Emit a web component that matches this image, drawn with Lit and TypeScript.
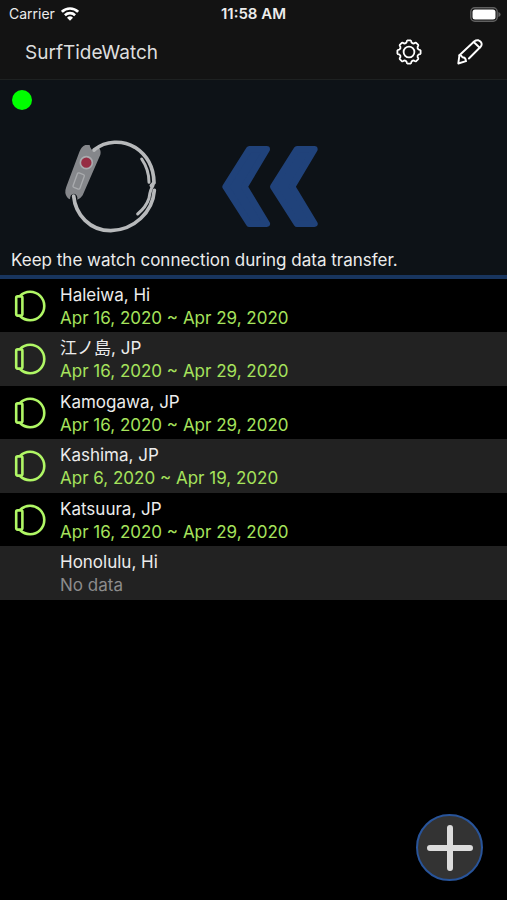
import { LitElement, html, css, svg } from "lit";
import { customElement, property } from "lit/decorators.js";

interface Spot {
  name: string;
  period?: string;
}

const SPOTS: Spot[] = [
  { name: "Haleiwa, Hi", period: "Apr 16, 2020 ~ Apr 29, 2020" },
  { name: "江ノ島, JP", period: "Apr 16, 2020 ~ Apr 29, 2020" },
  { name: "Kamogawa, JP", period: "Apr 16, 2020 ~ Apr 29, 2020" },
  { name: "Kashima, JP", period: "Apr 6, 2020 ~ Apr 19, 2020" },
  { name: "Katsuura, JP", period: "Apr 16, 2020 ~ Apr 29, 2020" },
  { name: "Honolulu, Hi" },
];

// Outline of a cog with eight teeth around the centre of a 26 unit box.
function cogPath(): string {
  const point = (radius: number, degrees: number) => {
    const a = (degrees * Math.PI) / 180;
    return `${(13 + radius * Math.sin(a)).toFixed(2)} ${(13 - radius * Math.cos(a)).toFixed(2)}`;
  };
  let d = "";
  for (let i = 0; i < 8; i++) {
    const a = i * 45;
    d += `${i ? "L" : "M"}${point(10, a - 14)} Q${point(11.6, a - 12)} ${point(11.7, a - 7)} L${point(11.7, a + 7)} Q${point(11.6, a + 12)} ${point(10, a + 14)} Q${point(8.8, a + 22.5)} ${point(10, a + 31)} `;
  }
  return d + "Z";
}

@customElement("status-bar")
export class StatusBar extends LitElement {
  static styles = css`
    :host {
      display: grid;
      grid-template-columns: 1fr auto 1fr;
      align-items: center;
      height: 28px;
      padding: 0 6px;
      font-size: 14px;
      line-height: 20px;
    }
    .carrier {
      display: flex;
      align-items: center;
      gap: 6px;
      padding-left: 3px;
    }
    .time {
      font-size: 15px;
      font-weight: 600;
    }
    .battery {
      justify-self: end;
    }
    svg {
      display: block;
    }
  `;
  render() {
    return html`
      <div class="carrier">
        <span>Carrier</span>
        <svg width="18" height="14" viewBox="0 0 18 14" fill="none" stroke="#fff" stroke-width="2.6">
          <path d="M.9 4.800A11.6 11.6 0 0 1 17.1 4.800" />
          <path d="M3.9 8.200A7.4 7.4 0 0 1 14.1 8.200" />
          <path d="M9 13.8L6 10.8A4.3 4.3 0 0 1 12 10.8Z" fill="#fff" stroke="none" />
        </svg>
      </div>
      <span class="time">11:58 AM</span>
      <svg class="battery" width="31" height="15" viewBox="0 0 31 15">
        <rect x=".8" y=".8" width="26.4" height="13.4" rx="4" fill="none" stroke="#606060" stroke-width="1.4" />
        <rect x="2.5" y="2.5" width="23" height="10" rx="2.5" fill="#fff" />
        <path d="M28.4 5Q30.6 5.800 30.6 7.500T28.4 10Z" fill="#606060" />
      </svg>
    `;
  }
}

@customElement("transfer-panel")
export class TransferPanel extends LitElement {
  static styles = css`
    :host {
      display: flex;
      flex-direction: column;
      background: #0d1217;
      border-top: 1px solid #1e2121;
      border-bottom: 4px solid #18355f;
      padding: 10px 11px 1px;
    }
    .dot {
      width: 20px;
      height: 20px;
      margin-left: 1px;
      border-radius: 50%;
      background: #00ff00;
    }
    .art {
      display: flex;
      gap: 40px;
      padding: 20px 39px 6px;
    }
    p {
      margin: 0;
      font-size: 17px;
      line-height: 28px;
    }
  `;
  render() {
    return html`
      <div class="dot" role="status" aria-label="Connected"></div>
      <div class="art">
        <svg width="120" height="110" viewBox="0 0 360 330" fill="none" stroke-linecap="round" stroke-linejoin="round">
          <path
            d="M106 45H119Q121 60 134 64Q143 60 147 54Q154 62 151 74L98 196Q92 206 82 209Q84 194 72 191Q60 192 60 208Q49 204 46 189Q45 180 49 170L88 66Q94 49 106 45Z"
            fill="#85878b"
          />
          <circle cx="109" cy="98" r="18" fill="#962c42" stroke="#a9abae" stroke-width="5" />
          <rect x="75" y="130" width="22" height="46" rx="4" transform="rotate(20 86 153)" stroke="#a9abae" stroke-width="4" />
          <g stroke="#b7b9bb" stroke-width="11">
            <path d="M132 60C168 31 218 30 255 52C292 76 311 111 312 158L304 167" />
            <path d="M71 198C76 254 120 302 182 302C252 300 308 247 313 181" />
            <path d="M275 87C291 110 297 132 297 157" stroke-width="9" />
            <path d="M309 167C300 180 299 191 297 205C290 226 278 240 263 252" stroke-width="9" />
          </g>
        </svg>
        <svg width="120" height="110" viewBox="0 0 360 330" fill="#20427a" stroke="#20427a" stroke-width="20" stroke-linejoin="round">
          <path d="M118 58H170L103 170L170 281H118L47 170Z" />
          <path d="M261 58H313L246 170L313 281H261L190 170Z" />
        </svg>
      </div>
      <p>Keep the watch connection during data transfer.</p>
    `;
  }
}

@customElement("spot-row")
export class SpotRow extends LitElement {
  @property({ attribute: false }) spot!: Spot;

  static styles = css`
    :host {
      display: grid;
      grid-template-columns: 32px 1fr;
      align-items: center;
      gap: 14px;
      padding: 4px 14px 2px;
    }
    svg {
      display: block;
    }
    .name,
    .period {
      font-size: 17px;
      line-height: 24px;
    }
    .period {
      line-height: 23px;
      color: #a6e35c;
    }
    .empty {
      color: #8c8c8c;
    }
  `;
  render() {
    const { name, period } = this.spot;
    const watch = svg`
      <path d="M6 6A14.200 14.200 0 1 1 6 26" />
      <rect x="2.200" y="6.400" width="6.200" height="19.200" rx="1.500" />`;
    return html`
      <div>
        ${period
          ? html`<svg width="32" height="34" viewBox="0 0 32 34" fill="none" stroke="#b0f765" stroke-width="2.6">${watch}</svg>`
          : ""}
      </div>
      <div>
        <div class="name">${name}</div>
        <div class="period ${period ? "" : "empty"}">${period ?? "No data"}</div>
      </div>
    `;
  }
}

@customElement("app-root")
export class AppRoot extends LitElement {
  static styles = css`
    :host {
      display: flex;
      flex-direction: column;
      min-height: 100vh;
      background: #000;
      color: #ececec;
      font-family: Inter, "Noto Sans CJK JP", sans-serif;
    }
    header {
      background: #131313;
    }
    .bar {
      display: flex;
      align-items: center;
      gap: 34px;
      height: 48px;
      padding: 0 23px 3px 25px;
    }
    h1 {
      flex: 1;
      margin: 0;
      font-size: 19px;
      font-weight: 400;
      color: #dedede;
    }
    button {
      padding: 0;
      border: 0;
      background: none;
      cursor: pointer;
    }
    svg {
      display: block;
    }
    ul {
      margin: 0;
      padding: 0;
      list-style: none;
    }
    li:nth-child(even) {
      background: #222;
      border-bottom: 1px solid #222;
    }
    .add {
      position: fixed;
      right: 24px;
      bottom: 19px;
      display: grid;
      place-items: center;
      box-sizing: border-box;
      width: 67px;
      height: 67px;
      border: 2px solid #28549a;
      border-radius: 50%;
      background: #333;
    }
  `;
  render() {
    return html`
      <header>
        <status-bar></status-bar>
        <div class="bar">
          <h1>SurfTideWatch</h1>
          <button aria-label="Settings">
            <svg width="26" height="26" viewBox="0 0 26 26" fill="none" stroke="#fff" stroke-width="1.800" stroke-linejoin="round">
              <path d=${cogPath()} />
              <circle cx="13" cy="13" r="5.400" />
            </svg>
          </button>
          <button aria-label="Edit">
            <svg width="28" height="28" viewBox="0 0 28 28" fill="none" stroke="#fff" stroke-width="1.900" stroke-linejoin="round" stroke-linecap="round">
              <path d="M3.400 17.300L18.400 3.300Q20.200 1.800 22.500 2.300Q25.400 3.300 25.700 6Q25.700 7.600 24.400 9L12.900 20.500" />
              <path d="M3.400 17.300L2.300 25.500L10 23.200Q9.700 19.300 6.400 19.200Q5.800 17.300 3.400 17.300M17.700 4L23.700 9.700" />
            </svg>
          </button>
        </div>
      </header>
      <transfer-panel></transfer-panel>
      <ul>
        ${SPOTS.map((spot) => html`<li><spot-row .spot=${spot}></spot-row></li>`)}
      </ul>
      <button class="add" aria-label="Add spot">
        <svg width="48" height="48" viewBox="0 0 48 48" stroke="#dcdcdc" stroke-width="6" stroke-linecap="round">
          <path d="M24 4V44M4 24H44" />
        </svg>
      </button>
    `;
  }
}
